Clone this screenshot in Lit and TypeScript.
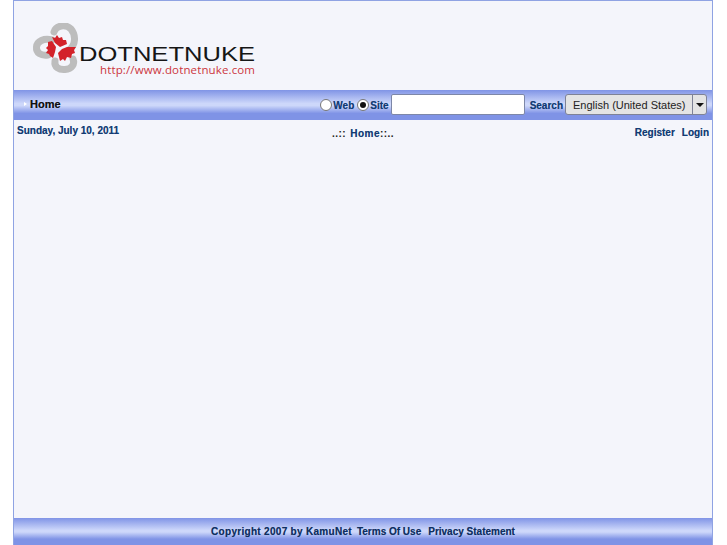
import { LitElement, html, css } from "lit";
import { customElement } from "lit/decorators.js";

@customElement("app-root")
export class AppRoot extends LitElement {
  static styles = css`
    :host { display: block; width: 727px; height: 545px; background: #fff; overflow: hidden;
      font-family: "Liberation Sans", Arial, sans-serif; }
    .page { box-sizing: border-box; width: 700px; height: 545px; margin-left: 13px;
      border: 1px solid #8fa3e3; border-bottom: 0; background: #f4f5fb; display: flex; flex-direction: column; }
    .head { height: 89px; padding: 22px 0 0 17px; box-sizing: border-box; }
    .head svg { display: block; }
    .bar { background: linear-gradient(#8094e6 0, #cdd7fa 45%, #cdd7fa 52%, #7f93e6 78%, #7f93e6 100%); }
    .nav { height: 30px; display: flex; align-items: center; font: bold 10px "Liberation Sans", sans-serif; }
    .home { color: #111; font-size: 11px; padding: 0 0 2px 10px; display: flex; align-items: center; gap: 3px; margin-right: auto; text-shadow: 0 0 .6px rgba(0,0,0,.5); }
    .arrow { width: 0; height: 0; border-left: 3px solid #fff; border-top: 2px solid transparent; border-bottom: 2px solid transparent; }
    a, .lbl { color: #123b73; text-shadow: 0 0 .6px rgba(18,59,115,.5); }
    .tools a, .tools .lbl { padding-top: 2px; }
    .radio { box-sizing: border-box; width: 12px; height: 12px; border-radius: 50%; border: 1px solid #777; background: #fff; margin-right: 1px; display: inline-flex; align-items: center; justify-content: center; }
    .radio.on::after { content: ""; width: 6px; height: 6px; border-radius: 50%; background: #111; }
    .tools { display: flex; align-items: center; padding-right: 5px; padding-bottom: 1px; }
    .web { margin-right: 3px; }
    .input { box-sizing: border-box; width: 134px; height: 21px; background: #fff; border: 1px solid #7d87a8; border-radius: 2px; margin: 0 5px 0 2px; }
    .select { box-sizing: border-box; display: flex; width: 142px; height: 21px; margin-left: 2px; border: 1px solid #7e8296; border-radius: 3px; background: #e4e4e4;
      color: #222; font: 11px "Liberation Sans", sans-serif; }
    .sel-t { flex: 1; display: flex; align-items: center; padding-left: 7px; }
    .sel-b { width: 13px; border-left: 1px solid #7e8296; display: flex; align-items: center; justify-content: center; }
    .sel-b i { border-top: 4px solid #111; border-left: 4px solid transparent; border-right: 4px solid transparent; }
    .info { display: grid; grid-template-columns: 1fr auto 1fr; font: bold 10px "Liberation Sans", sans-serif; color: #123b73; padding: 5px 3px 0 3px; }
    .date { text-shadow: 0 0 .6px rgba(18,59,115,.5); }
    .crumb { padding-top: 3px; color: #222; letter-spacing: .45px; }
    .crumb a { margin-left: 1px; }
    .links { justify-self: end; padding-top: 2px; display: flex; gap: 7px; }
    .spacer { flex: 1; }
    .foot { height: 27px; display: flex; align-items: center; justify-content: center; gap: 7px; font: bold 10px "Liberation Sans", sans-serif; color: #0f2f60; }
    .foot a { color: #0f2f60; }
    .foot .c { letter-spacing: .3px; margin-right: -2px; text-shadow: 0 0 .6px rgba(15,47,96,.5); }
  `;

  render() {
    return html`<div class="page">
      <div class="head">
        <svg width="230" height="56" viewBox="31 23 230 56">
          <g fill="none" stroke="#bdbdbd" stroke-width="7" stroke-linecap="round">
            <path d="M54 32 C56 25 66 24 71 29 C76 35 76 45 69 50"/>
            <path d="M52 40 C44 38 37 41 36.500 47 C36 53 41 56 48 55"/>
            <path d="M55 61 C54 67 59 70 65 69.500 C72 69 75 64 73 59"/>
          </g>
          <g fill="#d3222a">
            <polygon points="52,37 55,38 57,35 59,38 62,37 63,40 66,40 67,44 60,47 55,43"/>
            <polygon points="48,42 52,41 56,47 55,52 53,58 50,56 49,54 46,53 48,50 46,48 48,46"/>
            <polygon points="58,53 62,49 67,47 76,47 74,50 75,53 72,54 71,58 67,57 65,61 63,59 60,61"/>
          </g>
          <text x="79" y="60.500" font-family="'Liberation Sans',sans-serif" font-size="19.500" fill="#161616" textLength="176" lengthAdjust="spacingAndGlyphs">DOTNETNUKE</text>
          <text x="100" y="74" font-family="'Open Sans',sans-serif" font-size="11.500" fill="#cc3640" textLength="155">http://www.dotnetnuke.com</text>
        </svg>
      </div>
      <div class="bar nav">
        <div class="home"><span class="arrow"></span>Home</div>
        <div class="tools">
          <span class="radio"></span><span class="lbl web">Web</span>
          <span class="radio on"></span><span class="lbl">Site</span>
          <span class="input"></span>
          <a>Search</a>
          <div class="select"><span class="sel-t">English (United States)</span><span class="sel-b"><i></i></span></div>
        </div>
      </div>
      <div class="info">
        <span class="date">Sunday, July 10, 2011</span>
        <span class="crumb">..:: <a>Home</a>::..</span>
        <span class="links"><a>Register</a><a>Login</a></span>
      </div>
      <div class="spacer"></div>
      <div class="bar foot"><span class="c">Copyright 2007 by KamuNet</span><a>Terms Of Use</a><a>Privacy Statement</a></div>
    </div>`;
  }
}
